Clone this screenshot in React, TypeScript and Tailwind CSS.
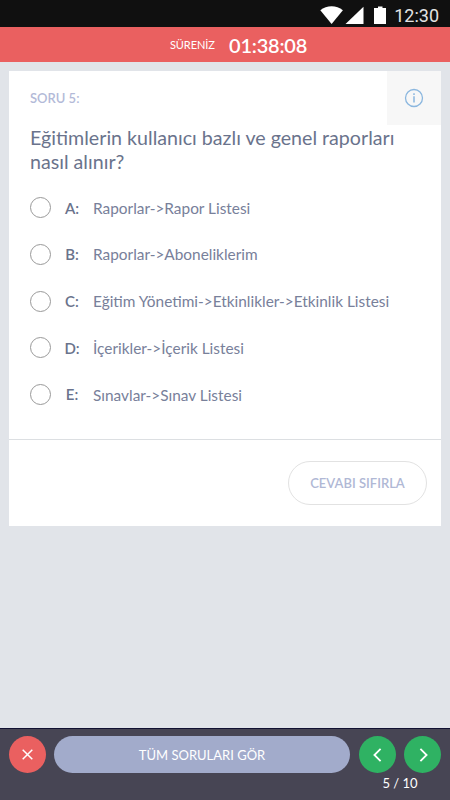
import React from "react";

const options = [
  { letter: "A:", text: "Raporlar->Rapor Listesi" },
  { letter: "B:", text: "Raporlar->Aboneliklerim" },
  { letter: "C:", text: "Eğitim Yönetimi->Etkinlikler->Etkinlik Listesi" },
  { letter: "D:", text: "İçerikler->İçerik Listesi" },
  { letter: "E:", text: "Sınavlar->Sınav Listesi" },
];

function StatusBar() {
  return (
    <div className="flex h-[27px] shrink-0 items-start justify-end bg-[#101010] pr-[11px] text-[#e3e3e3]">
      <svg className="mt-[6px] h-[18px] w-[67px]" viewBox="0 0 67 18" fill="#fff">
        <path d="M1.3 4.2C7.7-1 17.5-1 23.9 4.2L12.6 18Z" />
        <path d="M44.5 .8V18H26.5Z" />
        <path d="M55 2h4V.5h4.500V2h4v16H55Z" />
      </svg>
      <span className="ml-[8px] mt-[4px] font-['Roboto',sans-serif] text-[18px] leading-[24px]">12:30</span>
    </div>
  );
}

function Footer() {
  return (
    <div className="h-[72px] shrink-0 border-t border-[#111132] bg-[#474554] px-[9px] pt-[7px] text-white">
      <div className="flex items-center">
        <button className="flex size-[37px] items-center justify-center rounded-full bg-[#ea6060]">
          <svg className="size-[11px]" viewBox="0 0 11 11" fill="none" stroke="#fff" strokeWidth="1.5">
            <path d="M.7.7l9.6 9.6M10.3.7L.7 10.3" />
          </svg>
        </button>
        <button className="ml-[8px] h-[37px] w-[296px] rounded-full bg-[#a2abcb] pt-[2px] text-[13px]">
          TÜM SORULARI GÖR
        </button>
        <button className="ml-[9px] flex size-[37px] items-center justify-center rounded-full bg-[#2fb263]">
          <svg className="mr-px h-[14px] w-[9px]" viewBox="0 0 9 14" fill="none" stroke="#fff" strokeWidth="1.8">
            <path d="M7.6.8L1.4 7l6.2 6.2" />
          </svg>
        </button>
        <button className="ml-[8px] flex size-[37px] items-center justify-center rounded-full bg-[#2fb263]">
          <svg className="ml-[2px] h-[14px] w-[9px]" viewBox="0 0 9 14" fill="none" stroke="#fff" strokeWidth="1.8">
            <path d="M1.4.8L7.6 7l-6.2 6.2" />
          </svg>
        </button>
      </div>
      <div className="ml-[350px] mt-[2px] w-[82px] text-center text-[13px] leading-[17px]">5 / 10</div>
    </div>
  );
}

export default function App() {
  return (
    <div className="flex h-[800px] w-[450px] flex-col overflow-hidden bg-[#e1e4e9] font-['Lato',sans-serif] text-[#6a738c]">
      <StatusBar />
      <div className="flex h-[35px] shrink-0 items-center bg-[#ea6060] pl-[170px] text-white">
        <span className="w-[59px] pt-px text-[11px] tracking-[-0.1px]">SÜRENİZ</span>
        <span className="text-[20px] font-semibold leading-[24px] tracking-[-0.2px]">01:38:08</span>
      </div>
      <main className="flex-1 px-[9px] pt-[9px]">
        <div className="h-[455px] bg-white">
          <div className="flex h-[54px] justify-between">
            <span className="ml-[21px] mt-[18px] text-[13px] font-semibold leading-[18px] text-[#b3bad8]">SORU 5:</span>
            <div className="flex size-[54px] items-center justify-center bg-[#f7f7f7]">
              <svg className="size-[20px]" viewBox="0 0 20 20" fill="none" stroke="#8bb7df" strokeWidth="1.3">
                <circle cx="10" cy="10" r="8.5" />
                <path d="M10 8.3v6.2M10 5.2v1.7" strokeWidth="1.5" />
              </svg>
            </div>
          </div>
          <h1 className="ml-[21px] mt-px h-[48px] whitespace-nowrap text-[19.65px] leading-[24px]">
            Eğitimlerin kullanıcı bazlı ve genel raporları
            <br />
            nasıl alınır?
          </h1>
          <div className="mt-[10.5px] h-[255.5px] border-b border-[#dcdfe2]">
            {options.map((o) => (
              <label key={o.letter} className="flex h-[46.7px] items-center pl-[21px]">
                <span className="size-[21px] rounded-full border border-[#999]" />
                <span className="ml-[11px] w-[20px] text-center text-[15px] font-semibold">{o.letter}</span>
                <span className="ml-[11px] whitespace-nowrap pt-px text-[15.4px] text-[#78809a]">{o.text}</span>
              </label>
            ))}
          </div>
          <div className="flex justify-end pr-[14px] pt-[21px]">
            <button className="h-[44px] w-[139px] rounded-full border border-[#e2e2e2] pt-px text-[13px] font-semibold text-[#b0b8d5]">
              CEVABI SIFIRLA
            </button>
          </div>
        </div>
      </main>
      <Footer />
    </div>
  );
}
